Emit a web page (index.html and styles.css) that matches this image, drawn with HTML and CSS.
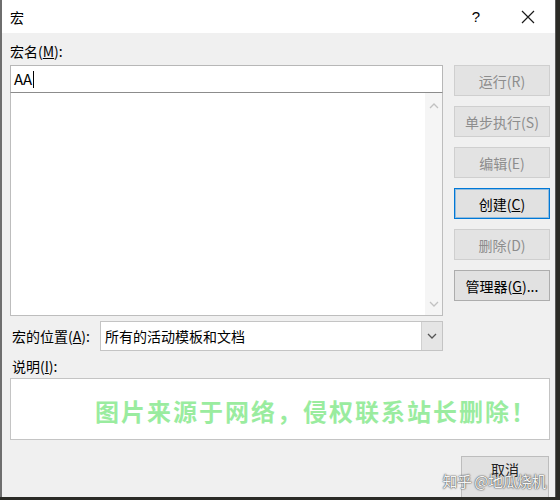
FILE: index.html
```html
<!DOCTYPE html>
<html lang="zh">
<head>
<meta charset="utf-8">
<link rel="stylesheet" href="styles.css">
</head>
<body>
<div class="dialog">
  <div class="titlebar">
    <span class="title">宏</span>
    <div class="controls">
      <span class="help">?</span>
      <svg class="close" width="14" height="14" viewBox="0 0 14 14"><path d="M1 1 L13 13 M13 1 L1 13" stroke="#1a1a1a" stroke-width="1.2" fill="none"/></svg>
    </div>
  </div>
  <div class="body">
    <div class="main">
      <div class="left">
        <div class="label label-name">宏名(<u>M</u>):</div>
        <div class="textbox">AA<span class="caret"></span></div>
        <div class="listbox">
          <div class="list-items"></div>
          <div class="scrollbar">
            <svg width="10" height="6" viewBox="0 0 10 6"><path d="M1 5 L5 1 L9 5" stroke="#c2c2c2" stroke-width="1.3" fill="none"/></svg>
            <svg width="10" height="6" viewBox="0 0 10 6"><path d="M1 1 L5 5 L9 1" stroke="#c2c2c2" stroke-width="1.3" fill="none"/></svg>
          </div>
        </div>
        <div class="location">
          <div class="label loc-label">宏的位置(<u>A</u>):</div>
          <div class="select">
            <span class="select-text">所有的活动模板和文档</span>
            <span class="select-arrow"><svg width="10" height="6" viewBox="0 0 10 6"><path d="M1 1 L5 5 L9 1" stroke="#555" stroke-width="1.3" fill="none"/></svg></span>
          </div>
        </div>
      </div>
      <div class="buttons">
        <div class="btn disabled">运行(R)</div>
        <div class="btn disabled">单步执行(S)</div>
        <div class="btn disabled">编辑(E)</div>
        <div class="btn focused">创建(<u>C</u>)</div>
        <div class="btn disabled">删除(D)</div>
        <div class="btn">管理器(<u>G</u>)...</div>
      </div>
    </div>
    <div class="label desc-label">说明(<u>I</u>):</div>
    <div class="descbox">
      <span class="watermark">图片来源于网络，侵权联系站长删除！</span>
    </div>
    <div class="footer">
      <div class="btn cancel">取消</div>
      <span class="zhihu">知乎 @地瓜烧机</span>
    </div>
  </div>
</div>
</body>
</html>
```
FILE: styles.css
```css
html, body {
  margin: 0;
  padding: 0;
}
body {
  width: 560px;
  height: 500px;
  background: #2b2b26;
  font-family: "Noto Sans CJK SC", "Noto Sans", sans-serif;
  font-size: 14px;
  color: #000;
  overflow: hidden;
  display: flex;
  align-items: flex-start;
}
.dialog {
  width: 553px;
  height: 497px;
  border-left: 2px solid #6e6e6e;
  border-right: 1px solid #5a5a5a;
  background: #f0f0f0;
  display: flex;
  flex-direction: column;
  overflow: hidden;
  position: relative;
}
.titlebar {
  height: 33px;
  flex: none;
  background: #ffffff;
  display: flex;
  align-items: center;
  justify-content: space-between;
  padding-left: 8px;
}
.title {
  font-size: 14px;
  line-height: 1;
}
.controls {
  display: flex;
  align-items: center;
}
.help {
  font-family: "Liberation Sans", sans-serif;
  font-size: 15px;
  width: 14px;
  text-align: center;
  margin-right: 38px;
}
.close {
  margin-right: 20px;
}
.body {
  flex: 1;
  padding: 0 5px 0 8px;
  display: flex;
  flex-direction: column;
  position: relative;
}
.main {
  display: flex;
}
.left {
  width: 433px;
  display: flex;
  flex-direction: column;
}
.label {
  line-height: 20px;
  white-space: nowrap;
}
.label-name {
  height: 32px;
  padding-top: 8px;
  box-sizing: border-box;
}
.textbox {
  height: 28px;
  box-sizing: border-box;
  background: #fff;
  border: 1px solid #b7b7b7;
  border-bottom-color: #8c8c8c;
  padding-left: 3px;
  line-height: 26px;
  font-size: 15px;
  display: flex;
  align-items: center;
}
.caret {
  display: inline-block;
  width: 1px;
  height: 17px;
  background: #000;
  margin-left: 1px;
}
.listbox {
  height: 223px;
  box-sizing: border-box;
  background: #fff;
  border: 1px solid #bdbdbd;
  border-top: none;
  display: flex;
}
.list-items {
  flex: 1;
}
.scrollbar {
  width: 17px;
  background: #f5f5f5;
  display: flex;
  flex-direction: column;
  justify-content: space-between;
  align-items: center;
  padding: 10px 0 8px;
}
.location {
  display: flex;
  align-items: center;
  margin-top: 5px;
  height: 30px;
}
.loc-label {
  width: 90px;
  flex: none;
  padding-left: 2px;
  box-sizing: border-box;
}
.select {
  flex: 1;
  height: 30px;
  box-sizing: border-box;
  background: #fff;
  border: 1px solid #c4c4c4;
  display: flex;
  align-items: center;
}
.select-text {
  flex: 1;
  padding-left: 4px;
}
.select-arrow {
  width: 20px;
  height: 28px;
  background: #e5e5e5;
  border-left: 1px solid #d0d0d0;
  display: flex;
  align-items: center;
  justify-content: center;
}
.buttons {
  margin-left: 11px;
  width: 96px;
  padding-top: 32px;
  display: flex;
  flex-direction: column;
  gap: 10px;
}
.btn {
  height: 31px;
  box-sizing: border-box;
  background: #e1e1e1;
  border: 1px solid #adadad;
  display: flex;
  align-items: center;
  justify-content: center;
  white-space: nowrap;
}
.btn.disabled {
  background: #e3e3e3;
  border-color: #cfcfcf;
  color: #8d8d8d;
}
.btn.focused {
  border-color: #0078d7;
  box-shadow: inset 0 0 0 1px rgba(0, 120, 215, 0.35);
}
.desc-label {
  height: 27px;
  padding-top: 5px;
  padding-left: 2px;
  box-sizing: border-box;
}
.descbox {
  height: 62px;
  width: 540px;
  box-sizing: border-box;
  background: #fff;
  border: 1px solid #c4c4c4;
  position: relative;
}
.watermark {
  position: absolute;
  left: 84px;
  top: 14px;
  font-size: 24px;
  font-weight: bold;
  color: #9aec9f;
  letter-spacing: 2px;
  white-space: nowrap;
}
.footer {
  display: flex;
  justify-content: flex-end;
  margin-top: 16px;
  padding-right: 1px;
  position: relative;
}
.btn.cancel {
  width: 88px;
  height: 42px;
  background: #e1e1e1;
  border-color: #bdbdbd;
  align-items: flex-start;
  padding-top: 2px;
  color: #222;
}
.zhihu {
  position: absolute;
  right: 4px;
  top: 14px;
  font-size: 15px;
  letter-spacing: -0.5px;
  color: #f4f4f4;
  text-shadow: 0 0 1px #333, 0 0 2px #555;
  white-space: nowrap;
}
```
